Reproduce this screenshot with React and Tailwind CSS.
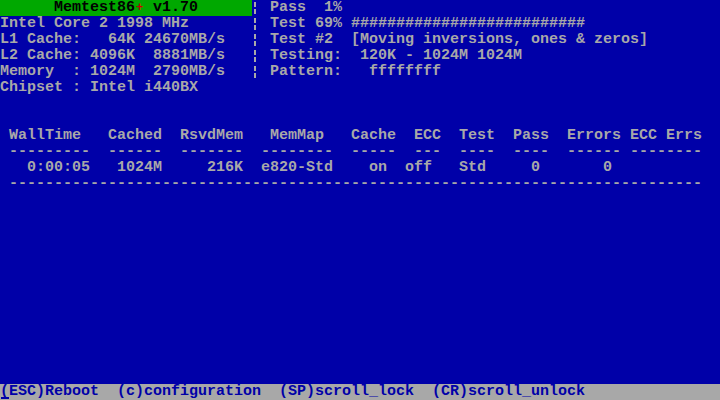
const Bar = () => (
  <span className="inline-block w-[9px] h-[16px] align-top relative">
    <span className="absolute left-[2px] top-[2px] w-[2px] h-[5px] bg-[#a8a8a8]" />
    <span className="absolute left-[2px] top-[9px] w-[2px] h-[5px] bg-[#a8a8a8]" />
  </span>
);

const left = [
  "Intel Core 2 1998 MHz       ",
  "L1 Cache:   64K 24670MB/s   ",
  "L2 Cache: 4096K  8881MB/s   ",
  "Memory  : 1024M  2790MB/s   ",
];
const right = [
  " Test 69% ##########################",
  " Test #2  [Moving inversions, ones & zeros]",
  " Testing:  120K - 1024M 1024M",
  " Pattern:   ffffffff",
];

const table = [
  "Chipset : Intel i440BX",
  "",
  "",
  " WallTime   Cached  RsvdMem   MemMap   Cache  ECC  Test  Pass  Errors ECC Errs",
  " ---------  ------  -------  --------  -----  ---  ----  ----  ------ --------",
  "   0:00:05   1024M     216K  e820-Std    on  off   Std     0       0",
  " " + "-".repeat(77),
];

const Line = ({ children, className = "" }) => (
  <div className={`h-[16px] leading-[16px] whitespace-pre ${className}`}>{children}</div>
);

export default function App() {
  return (
    <div
      className="w-[720px] h-[400px] bg-[#0000a8] text-[#a8a8a8] text-[15px] font-bold flex flex-col overflow-hidden"
      style={{ fontFamily: '"Liberation Mono", "DejaVu Sans Mono", monospace' }}
    >
      <Line>
        <span className="bg-[#00a800] text-black inline-block w-[252px] whitespace-pre">
          {"      Memtest86"}
          <span className="text-[#c00000] text-[12px] inline-block w-[9px] text-center">+</span>
          {" v1.70"}
        </span>
        <Bar />
        {" Pass  1%"}
      </Line>
      {left.map((l, i) => (
        <Line key={i}>
          {l}
          <Bar />
          {right[i]}
        </Line>
      ))}
      {table.map((r, i) => (
        <Line key={"t" + i}>{r}</Line>
      ))}
      <div className="flex-1" />
      <Line className="bg-[#a8a8a8] text-[#0000a8]">
        <span className="relative">
          (
          <span className="absolute left-[1px] bottom-[1px] h-[2px] w-[8px] bg-[#0000a8]" />
        </span>
        {"ESC)Reboot  (c)configuration  (SP)scroll_lock  (CR)scroll_unlock"}
      </Line>
    </div>
  );
}
